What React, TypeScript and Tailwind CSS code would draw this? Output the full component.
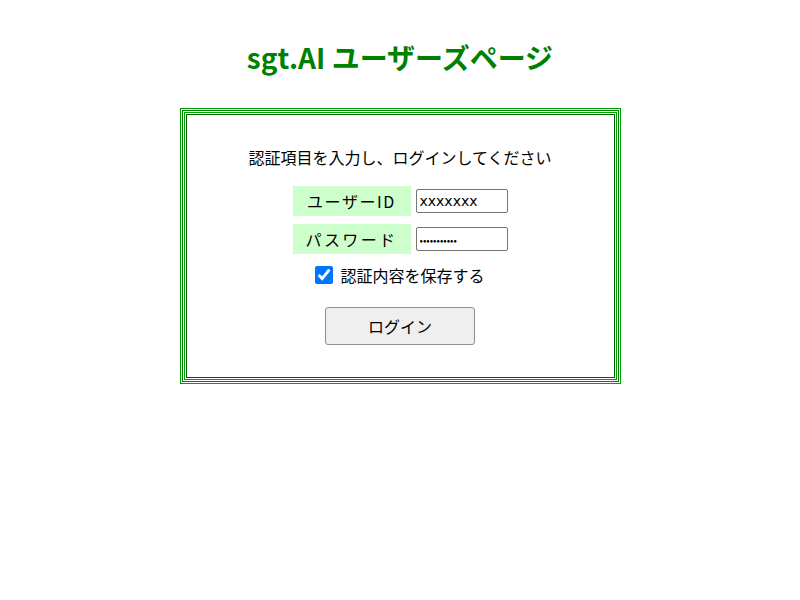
export default function App() {
  return (
    <div className="min-h-[600px] bg-white font-['Noto_Sans_CJK_JP','Noto_Sans',sans-serif] text-black">
      <h1 className="pt-[38px] text-center text-[28px] font-bold leading-[38px] text-[#008000]">
        sgt.AI ユーザーズページ
      </h1>

      {/* framed login table */}
      <div className="mx-auto mt-[32px] w-[441px] border border-[#00a000] p-px">
        <div className="border border-[#008000] p-px">
          <div className="border border-[#00a000] p-px">
            <div className="flex h-[264px] flex-col items-center border border-[#006000] pt-[30px]">
              <p className="text-[16px] leading-[24px]">認証項目を入力し、ログインしてください</p>

              <div className="mt-[17px] flex flex-col gap-[8px]">
                <div className="flex items-center gap-[5px]">
                  <div className="flex h-[30px] w-[118px] items-center justify-center bg-[#ccffcc] text-[16px] tracking-[0.1em]">
                    ユーザーID
                  </div>
                  <input
                    type="text"
                    defaultValue="xxxxxxx"
                    className="h-[24px] w-[92px] rounded-[2px] border border-[#767676] px-[3px] font-['DejaVu_Sans',sans-serif] text-[14px] outline-none"
                  />
                </div>
                <div className="flex items-center gap-[5px]">
                  <div className="flex h-[30px] w-[118px] items-center justify-center bg-[#ccffcc] text-[16px] tracking-[0.15em]">
                    パスワード
                  </div>
                  <input
                    type="password"
                    defaultValue="xxxxxxxxxxx"
                    className="h-[24px] w-[92px] rounded-[2px] border border-[#767676] px-[3px] text-[10px] outline-none"
                  />
                </div>
              </div>

              <label className="mt-[11px] flex items-center gap-[7px] text-[16px] leading-[20px]">
                <input type="checkbox" defaultChecked className="h-[18px] w-[18px] accent-[#0075ff]" />
                認証内容を保存する
              </label>

              <button
                type="button"
                className="mt-[22px] h-[38px] w-[150px] rounded-[3px] border border-[#8f8f8f] bg-[#efefef] text-[16px]"
              >
                ログイン
              </button>
            </div>
          </div>
        </div>
      </div>
    </div>
  );
}
